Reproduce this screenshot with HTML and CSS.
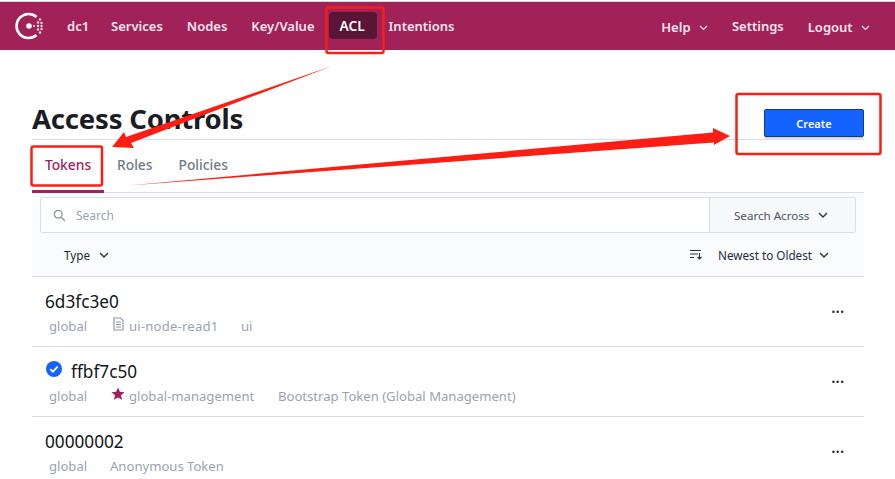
FILE: index.html
```html
<!DOCTYPE html>
<html lang="en">
<head>
<meta charset="utf-8">
<title>Access Controls - Consul</title>
<link rel="stylesheet" href="styles.css">
</head>
<body>
<header class="topbar">
  <nav class="nav-main">
    <svg class="logo" width="30" height="28" viewBox="0 0 30 28" aria-hidden="true">
      <path class="logo-ring" d="M21.500 5A12 12 0 1 0 21.500 23"/>
      <circle class="logo-dot" cx="14" cy="14" r="2.800"/>
      <g class="logo-dot">
        <circle cx="19" cy="14" r="1"/><circle cx="23" cy="14" r="1.200"/><circle cx="26.500" cy="14" r="1.200"/>
        <circle cx="23" cy="10.500" r="1.200"/><circle cx="26.500" cy="11" r="1.200"/><circle cx="25" cy="7.500" r="1.200"/>
        <circle cx="23" cy="17.500" r="1.200"/><circle cx="26.500" cy="17" r="1.200"/><circle cx="25" cy="20.500" r="1.200"/>
      </g>
    </svg>
    <a class="nav-link dc">dc1</a>
    <a class="nav-link">Services</a>
    <a class="nav-link">Nodes</a>
    <a class="nav-link">Key/Value</a>
    <a class="nav-link active">ACL</a>
    <a class="nav-link">Intentions</a>
  </nav>
  <nav class="nav-side">
    <a class="nav-link drop">Help <svg class="chev" width="9" height="6" viewBox="0 0 9 6"><path d="M1 1l3.500 3.500L8 1"/></svg></a>
    <a class="nav-link">Settings</a>
    <a class="nav-link drop">Logout <svg class="chev" width="9" height="6" viewBox="0 0 9 6"><path d="M1 1l3.500 3.500L8 1"/></svg></a>
  </nav>
</header>

<main class="page">
  <div class="title-row">
    <h1>Access Controls</h1>
    <button class="btn-create">Create</button>
  </div>
  <div class="tabs">
    <a class="tab current">Tokens</a>
    <a class="tab">Roles</a>
    <a class="tab">Policies</a>
  </div>

  <section class="filters">
    <div class="search">
      <div class="search-field">
        <svg class="search-icon" width="13" height="13" viewBox="0 0 13 13"><circle cx="5.200" cy="5.200" r="3.900"/><path d="M8.200 8.200l3.600 3.600"/></svg>
        <span>Search</span>
      </div>
      <div class="search-across">Search Across <svg class="chev dark" width="10" height="6" viewBox="0 0 10 6"><path d="M1 1l4 4 4-4"/></svg></div>
    </div>
    <div class="sort-row">
      <span class="sort-item type">Type <svg class="chev dark" width="10" height="6" viewBox="0 0 10 6"><path d="M1 1l4 4 4-4"/></svg></span>
      <span class="sort-item">
        <svg class="sort-icon" width="13" height="11" viewBox="0 0 13 11"><path d="M0 1.500h11M0 5h8M0 8.500h4M9.500 4v6M7.500 8l2 2 2-2"/></svg>
        Newest to Oldest <svg class="chev dark" width="10" height="6" viewBox="0 0 10 6"><path d="M1 1l4 4 4-4"/></svg>
      </span>
    </div>
  </section>

  <ul class="tokens">
    <li class="token">
      <div class="token-body">
        <div class="token-id">6d3fc3e0</div>
        <div class="token-meta">
          <span>global</span>
          <span class="policy"><svg class="doc-icon" width="11" height="14" viewBox="0 0 11 14"><path d="M1 1h6.500L10 3.500V13H1zM3 5h5M3 7.500h5M3 10h5"/></svg>ui-node-read1</span>
          <span class="desc">ui</span>
        </div>
      </div>
      <span class="more">•••</span>
    </li>
    <li class="token">
      <div class="token-body">
        <div class="token-id"><svg class="check" width="16" height="16" viewBox="0 0 16 16"><circle cx="8" cy="8" r="8"/><path d="M4.300 8.200l2.600 2.500 4.800-5"/></svg>ffbf7c50</div>
        <div class="token-meta">
          <span>global</span>
          <span class="policy"><svg class="star" width="14" height="14" viewBox="0 0 14 14"><path d="M7 .5l1.900 4.300 4.600.4-3.500 3 1.100 4.600L7 10.400l-4.100 2.400 1.100-4.600-3.500-3 4.600-.4z"/></svg>global-management</span>
          <span class="desc">Bootstrap Token (Global Management)</span>
        </div>
      </div>
      <span class="more">•••</span>
    </li>
    <li class="token">
      <div class="token-body">
        <div class="token-id">00000002</div>
        <div class="token-meta">
          <span>global</span>
          <span class="anon">Anonymous Token</span>
        </div>
      </div>
      <span class="more">•••</span>
    </li>
  </ul>
</main>

<!-- Hand-drawn callouts laid over the page -->
<svg class="callouts" width="895" height="479" viewBox="0 0 895 479" aria-hidden="true">
  <rect class="box" x="326.500" y="7.500" width="57" height="45.500" rx="2"/>
  <rect class="box" x="31.500" y="146.500" width="70.500" height="39" rx="2"/>
  <rect class="box" x="736.500" y="94" width="144" height="60" rx="2"/>
  <path class="arrow" d="M332 66L131 143 134 148 112 147 124 132 126 137z"/>
  <path class="arrow" d="M128 185.500L714 142.500 714 145 730 136 713 128 713 132.500z"/>
</svg>
</body>
</html>
```

FILE: styles.css
```css
* { box-sizing: border-box; }

html, body { margin: 0; padding: 0; }

body {
  width: 895px;
  height: 479px;
  overflow: hidden;
  position: relative;
  background: #fff;
  font-family: "Noto Sans", "Open Sans", sans-serif;
  color: #1f2933;
}

/* top navigation */
.topbar {
  height: 48px;
  margin-top: 2px;
  padding: 0 25px 0 15px;
  background: #a02258;
  display: flex;
  align-items: center;
  justify-content: space-between;
  box-shadow: 0 -1px 0 #d8d8dc;
}

.nav-main, .nav-side { display: flex; align-items: center; }

.logo { margin-right: 7px; margin-top: -1px; }
.logo-ring { fill: none; stroke: #fff; stroke-width: 2.600; }
.logo-dot { fill: #fff; }
.logo-dot circle { fill: #f3dbe5; }

.nav-link {
  font-size: 13px;
  font-weight: 600;
  color: #f6e6ed;
  line-height: 27px;
  padding: 0 12px;
  margin-top: 1px;
  white-space: nowrap;
}

.nav-link.dc { padding-left: 15px; padding-right: 10px; }

.nav-link.active {
  color: #fff;
  background: #5a1436;
  border-radius: 4px;
  width: 48px;
  padding: 0 11px;
  font-size: 13.800px;
  margin-top: -1px;
  margin-left: 2px;
}

.nav-side .nav-link { padding: 0; margin-left: 24px; }
.nav-side .drop { margin-top: 2px; }

.chev { fill: none; stroke: #f6e6ed; stroke-width: 1.200; margin-left: 5px; vertical-align: 1px; }
.chev.dark { stroke: #2a3340; stroke-width: 1.400; }

/* page header */
.page { padding: 0 31px 0 32px; }

.title-row {
  height: 90px;
  display: flex;
  align-items: flex-end;
  justify-content: space-between;
  border-bottom: 1px solid #dcdde4;
  position: relative;
}

h1 {
  margin: 0 0 1px;
  font-size: 27.500px;
  line-height: 38px;
  font-weight: 700;
  color: #1a1e24;
  letter-spacing: -0.200px;
}

.btn-create {
  position: absolute;
  right: 0;
  top: 59px;
  width: 100px;
  height: 28px;
  padding: 0;
  border: 1px solid #103a85;
  border-radius: 2px;
  background: #1563ff;
  color: #fff;
  font: 600 11px "Noto Sans", "Open Sans", sans-serif;
  box-shadow: 0 2px 0 -0.500px #c9ccd3;
}

/* tabs */
.tabs {
  height: 53px;
  display: flex;
  border-bottom: 1px solid #dcdde4;
}

.tab {
  font-size: 13.800px;
  font-weight: 500;
  color: #6f7a8a;
  line-height: 50px;
  margin-right: 26px;
}

.tab.current {
  width: 72px;
  margin-right: 13px;
  text-align: center;
  color: #a02258;
  border-bottom: 3px solid #a02258;
  height: 53px;
}

/* search and sort */
.filters {
  height: 84px;
  background: #fafbfc;
  border-bottom: 1px solid #dcdde4;
  padding: 4px 8px 0;
}

.search {
  height: 36px;
  display: flex;
  border: 1px solid #dcdde4;
  border-radius: 2px;
  background: #fff;
}

.search-field {
  flex: 1;
  display: flex;
  align-items: center;
  gap: 10px;
  padding-left: 12px;
  font-size: 12px;
  color: #9aa3b2;
}

.search-icon { fill: none; stroke: #8a93a3; stroke-width: 1.300; }

.search-across {
  width: 146px;
  background: #f7f8fa;
  border-left: 1px solid #dcdde4;
  display: flex;
  align-items: center;
  gap: 4px;
  padding-left: 24px;
  font-size: 11.600px;
  color: #4b5563;
}

.sort-row {
  height: 43px;
  display: flex;
  align-items: center;
  justify-content: space-between;
  padding: 0 27px 0 24px;
  font-size: 11.700px;
  color: #1f2d3d;
}

.sort-item { display: flex; align-items: center; }
.sort-item .chev { margin-left: 7px; }
.sort-item.type .chev { margin-left: 9px; }
.sort-icon { fill: none; stroke: #2a3340; stroke-width: 1.100; margin-right: 15px; }

/* token list */
.tokens { list-style: none; margin: 0; padding: 0; }

.token {
  height: 70px;
  border-bottom: 1px solid #dcdde4;
  display: flex;
  justify-content: space-between;
  padding: 13px 20px 0 13px;
}

.token-id {
  font-size: 17.200px;
  line-height: 24px;
  color: #101418;
  display: flex;
  align-items: center;
}

.token-meta {
  display: flex;
  font-size: 13.100px;
  line-height: 24px;
  color: #9aa3b2;
  padding-left: 4px;
}

.token-meta > span:first-child { width: 60px; }
.token-meta .anon { margin-left: 1px; }

.policy { display: inline-flex; align-items: center; }
.token:first-child .policy { width: 132px; letter-spacing: 0.200px; }
.token:nth-child(2) .policy { width: 169px; }

.doc-icon { fill: none; stroke: #8a93a3; stroke-width: 1.100; margin: -4px 5px 0 4px; }
.star { fill: #a02258; margin: -5px 4px 0 2px; }

.check { margin: -6px 9px 0 1px; }
.check circle { fill: #1563ff; }
.check path { fill: none; stroke: #fff; stroke-width: 1.800; }

.more {
  font-size: 8px;
  letter-spacing: -0.400px;
  color: #1f2933;
  line-height: 46px;
  font-family: "DejaVu Sans", sans-serif;
}

/* callout marks */
.callouts { position: absolute; left: 0; top: 0; pointer-events: none; }
.box { fill: none; stroke: #fb1e14; stroke-width: 2.500; }
.arrow { fill: #fb1e14; }
```
